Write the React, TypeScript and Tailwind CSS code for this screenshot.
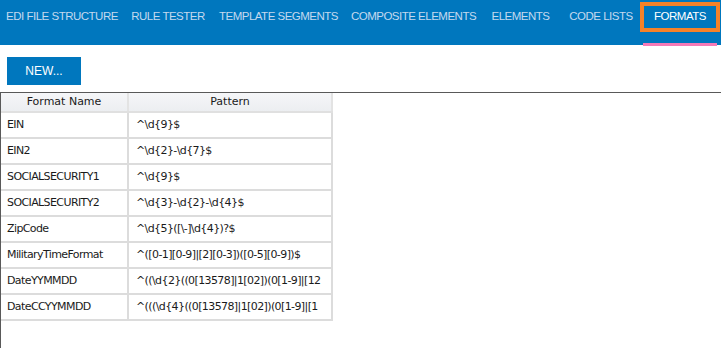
import React from 'react';

const tabs = [
  { label: 'EDI FILE STRUCTURE', w: 'w-[124px]' },
  { label: 'RULE TESTER', w: 'w-[88px]' },
  { label: 'TEMPLATE SEGMENTS', w: 'w-[133px]' },
  { label: 'COMPOSITE ELEMENTS', w: 'w-[137px]' },
  { label: 'ELEMENTS', w: 'w-[77px]' },
  { label: 'CODE LISTS', w: 'w-[84px]' },
  { label: 'FORMATS', w: 'w-[74px]', active: true },
];

const formats = [
  ['EIN', '^\\d{9}$'],
  ['EIN2', '^\\d{2}-\\d{7}$'],
  ['SOCIALSECURITY1', '^\\d{9}$'],
  ['SOCIALSECURITY2', '^\\d{3}-\\d{2}-\\d{4}$'],
  ['ZipCode', '^\\d{5}([\\-]\\d{4})?$'],
  ['MilitaryTimeFormat', '^([0-1][0-9]|[2][0-3])([0-5][0-9])$'],
  ['DateYYMMDD', '^((\\d{2}((0[13578]|1[02])(0[1-9]|[12'],
  ['DateCCYYMMDD', '^(((\\d{4}((0[13578]|1[02])(0[1-9]|[1'],
];

export default function App() {
  return (
    <div className="w-[721px] h-[348px] bg-white overflow-hidden flex flex-col font-['Liberation_Sans',sans-serif]">
      {/* top nav */}
      <div className="h-[45px] bg-[#0077be] flex items-start shrink-0">
        {tabs.map((t) => (
          <div key={t.label} className={`${t.w} h-[45px] relative flex flex-col items-center`}>
            <div
              className={`h-[32px] pt-[1px] flex items-center text-[11.5px] tracking-[-0.5px] whitespace-nowrap ${
                t.active ? 'text-white' : 'text-[#c4d9ee]'
              }`}
            >
              {t.label}
            </div>
            {t.active && (
              <>
                <div className="absolute left-0 right-0 bottom-[-1px] h-[3px] bg-[#f57ab8]" />
                <div className="absolute left-[-3px] right-[-3px] top-[2px] h-[30px] border-[4px] border-[#f5822a]" />
              </>
            )}
          </div>
        ))}
      </div>

      {/* toolbar */}
      <div className="h-[47px] pt-[12px] pl-[7px] shrink-0">
        <button className="w-[74px] h-[28px] bg-[#0077be] text-white text-[12px] flex items-center justify-center">
          NEW...
        </button>
      </div>

      {/* grid */}
      <div className="flex-1 border-t border-l border-[#595959] font-['DejaVu_Sans',sans-serif] text-[11px] text-[#1a1a1a]">
        <div className="w-[332px]">
          <div className="flex h-[20px] bg-gradient-to-b from-[#f5f6f8] to-[#eceef1] border-b-2 border-[#e0e0e0]">
            <div className="w-[128px] border-r-2 border-[#e3e3e3] flex items-center justify-center">Format Name</div>
            <div className="flex-1 border-r-2 border-[#e3e3e3] flex items-center justify-center">Pattern</div>
          </div>
          {formats.map(([name, pattern]) => (
            <div key={name} className="flex h-[26px] border-b-2 border-[#dcdcdc]">
              <div className="w-[128px] border-r-2 border-[#dcdcdc] flex items-center pl-[6px] tracking-[-0.6px]">{name}</div>
              <div className="flex-1 border-r-2 border-[#dcdcdc] flex items-center pl-[7px] tracking-[-0.6px] whitespace-nowrap overflow-hidden">
                {pattern}
              </div>
            </div>
          ))}
        </div>
      </div>
    </div>
  );
}
